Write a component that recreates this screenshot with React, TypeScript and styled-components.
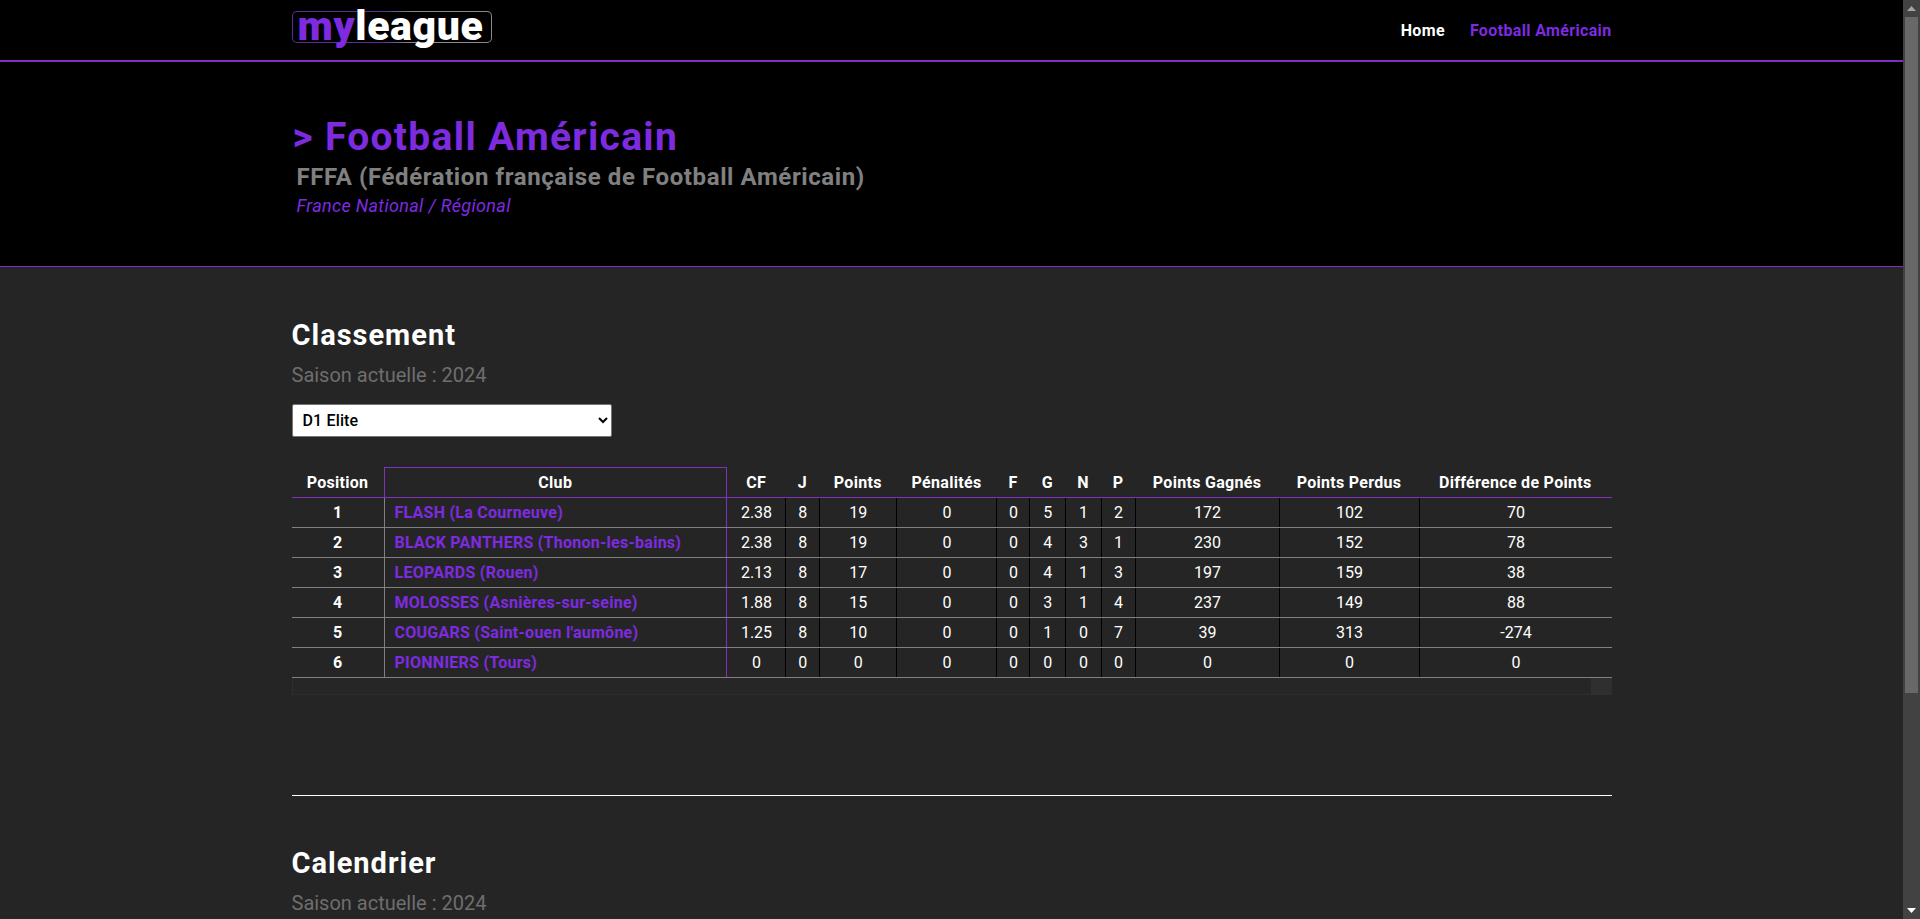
import React from "react";
import styled, { createGlobalStyle } from "styled-components";

const PURPLE = "#7e2be0";
const LINE = "#7f30c0";

const Global = createGlobalStyle`
  html { background: #252525; }
  body { margin: 0; background: #252525; color: #fff; font-family: Roboto, "Noto Sans", sans-serif; }
`;

const Page = styled.div`
  min-height: 1203px;
  margin-right: 17px;
`;
const Container = styled.div`
  width: 1320px;
  margin: 0 auto;
`;
const Rail = styled.div`
  position: fixed;
  top: 0;
  right: 0;
  bottom: 0;
  width: 17px;
  background: #424242;
  display: flex;
  flex-direction: column;
`;
const RailButton = styled.div`
  height: 17px;
  display: flex;
  align-items: center;
  justify-content: center;
  flex: none;
`;
const RailThumb = styled.div`
  height: 676px;
  margin: 0 2px;
  background: #686868;
  flex: none;
`;
const RailSpacer = styled.div`
  flex: 1;
`;
const Header = styled.header`
  background: #000;
  border-bottom: 2px solid ${LINE};
`;
const HeaderRow = styled(Container)`
  height: 60px;
  display: flex;
  align-items: center;
  justify-content: space-between;
`;
const Logo = styled.div`
  width: 200px;
  height: 32px;
  margin-bottom: 6px;
  box-sizing: border-box;
  border: 1px solid transparent;
  border-radius: 5px;
  background: linear-gradient(#000, #000) padding-box,
    linear-gradient(90deg, #5b2a96 0%, #5b2a96 45%, #8a8a8a 60%, #8a8a8a 100%) border-box;
  display: flex;
  align-items: flex-start;
  padding-left: 5px;
`;
const LogoText = styled.span`
  font: 900 41px/32px Roboto, sans-serif;
  letter-spacing: 0.6px;
  margin-top: -2px;
  color: #fff;
`;
const LogoMy = styled.span`
  color: ${PURPLE};
`;
const Nav = styled.nav`
  display: flex;
  gap: 25px;
  margin-top: 2px;
`;
const NavLink = styled.a<{ $active?: boolean }>`
  font-size: 16px;
  font-weight: 700;
  line-height: 24px;
  letter-spacing: 0.35px;
  color: ${(p) => (p.$active ? PURPLE : "#fff")};
`;
const Hero = styled.section`
  background: #000;
  border-bottom: 1px solid ${LINE};
  padding: 51px 0 48px;
`;
const HeroTitle = styled.h1`
  margin: 0 0 1px;
  font-size: 39px;
  line-height: 48px;
  letter-spacing: 1.3px;
  font-weight: 700;
  color: ${PURPLE};
  padding-left: 1px;
`;
const HeroSub = styled.div`
  margin: 0 0 2px 5px;
  font-size: 24px;
  line-height: 30px;
  letter-spacing: 0.6px;
  font-weight: 700;
  color: #808080;
`;
const HeroNote = styled.div`
  margin-left: 5px;
  font-size: 18px;
  line-height: 24px;
  letter-spacing: 0.33px;
  font-style: italic;
  color: ${PURPLE};
`;
const Main = styled(Container)`
  padding-top: 51px;
`;
const SectionTitle = styled.h2`
  margin: 0 0 11px;
  font-size: 29px;
  line-height: 34px;
  letter-spacing: 1px;
  font-weight: 700;
  color: #fff;
`;
const Season = styled.div`
  font-size: 20px;
  line-height: 24px;
  color: #6e6e6e;
`;
const Select = styled.select`
  display: block;
  width: 320px;
  height: 33px;
  margin: 17px 0 30px;
  padding: 0 6px;
  background: #fff;
  border: 1px solid #767676;
  border-radius: 2px;
  color: #000;
  font: 500 16px Roboto, sans-serif;
  letter-spacing: 0.15px;
`;
const Table = styled.table`
  width: 1320px;
  table-layout: fixed;
  border-collapse: collapse;
  font-size: 16px;
  color: #fff;
`;
const Col = styled.col<{ $w: number }>`
  width: ${(p) => p.$w}px;
`;
const Th = styled.th<{ $club?: boolean }>`
  height: 29px;
  padding: 0;
  font-weight: 700;
  letter-spacing: 0.3px;
  text-align: center;
  white-space: nowrap;
  border-bottom: 1px solid ${LINE};
  ${(p) => (p.$club ? `border: 1px solid ${LINE};` : "")}
`;
const Td = styled.td`
  height: 29px;
  padding: 0 0 0 1px;
  text-align: center;
  border-bottom: 1px solid #808080;
  border-left: 1px solid #000;
  &:first-child {
    border-left: none;
    padding-left: 0;
    font-weight: 700;
  }
`;
const ClubTd = styled(Td)`
  text-align: left;
  padding-left: 10px;
  font-weight: 700;
  letter-spacing: 0.26px;
  color: ${PURPLE};
  border-left: 1px solid #808080;
  border-right: 1px solid ${LINE};
  white-space: nowrap;
`;
const ScrollStrip = styled.div`
  display: flex;
  height: 17px;
  background: #2f2f2f;
`;
const ScrollThumb = styled.div`
  width: 1299px;
  box-sizing: border-box;
  background: #262626;
  border-left: 1px solid #2e2e2e;
  border-bottom: 1px solid #2e2e2e;
`;
const Rule = styled.hr`
  margin: 100px 0 50px;
  border: none;
  height: 1px;
  background: #fff;
`;

const widths = [92.5, 342.5, 59, 33.5, 77.5, 100, 33, 35.5, 36, 34, 144, 140, 192.5];
const heads = ["Position", "Club", "CF", "J", "Points", "Pénalités", "F", "G", "N", "P", "Points Gagnés", "Points Perdus", "Différence de Points"];
const rows: (string | number)[][] = [
  [1, "FLASH (La Courneuve)", "2.38", 8, 19, 0, 0, 5, 1, 2, 172, 102, 70],
  [2, "BLACK PANTHERS (Thonon-les-bains)", "2.38", 8, 19, 0, 0, 4, 3, 1, 230, 152, 78],
  [3, "LEOPARDS (Rouen)", "2.13", 8, 17, 0, 0, 4, 1, 3, 197, 159, 38],
  [4, "MOLOSSES (Asnières-sur-seine)", "1.88", 8, 15, 0, 0, 3, 1, 4, 237, 149, 88],
  [5, "COUGARS (Saint-ouen l'aumône)", "1.25", 8, 10, 0, 0, 1, 0, 7, 39, 313, -274],
  [6, "PIONNIERS (Tours)", 0, 0, 0, 0, 0, 0, 0, 0, 0, 0, 0],
];

export default function App() {
  return (
    <Page>
      <Global />
      <Header>
        <HeaderRow>
          <Logo>
            <LogoText>
              <LogoMy>my</LogoMy>league
            </LogoText>
          </Logo>
          <Nav>
            <NavLink>Home</NavLink>
            <NavLink $active>Football Américain</NavLink>
          </Nav>
        </HeaderRow>
      </Header>
      <Hero>
        <Container>
          <HeroTitle>&gt; Football Américain</HeroTitle>
          <HeroSub>FFFA (Fédération française de Football Américain)</HeroSub>
          <HeroNote>France National / Régional</HeroNote>
        </Container>
      </Hero>
      <Main>
        <SectionTitle>Classement</SectionTitle>
        <Season>Saison actuelle : 2024</Season>
        <Select defaultValue="D1 Elite">
          <option>D1 Elite</option>
        </Select>
        <Table>
          <colgroup>
            {widths.map((w, i) => (
              <Col key={i} $w={w} />
            ))}
          </colgroup>
          <thead>
            <tr>
              {heads.map((h, i) => (
                <Th key={h} $club={i === 1}>
                  {h}
                </Th>
              ))}
            </tr>
          </thead>
          <tbody>
            {rows.map((r) => (
              <tr key={r[0]}>
                {r.map((c, i) =>
                  i === 1 ? <ClubTd key={i}>{c}</ClubTd> : <Td key={i}>{c}</Td>
                )}
              </tr>
            ))}
          </tbody>
        </Table>
        <ScrollStrip>
          <ScrollThumb />
        </ScrollStrip>
        <Rule />
        <SectionTitle>Calendrier</SectionTitle>
        <Season>Saison actuelle : 2024</Season>
      </Main>
      <Rail>
        <RailButton>
          <svg width="9" height="5" viewBox="0 0 9 5"><path d="M4.5 0 9 5H0z" fill="#a3a3a3" /></svg>
        </RailButton>
        <RailThumb />
        <RailSpacer />
        <RailButton>
          <svg width="9" height="5" viewBox="0 0 9 5"><path d="M0 0h9L4.5 5z" fill="#fff" /></svg>
        </RailButton>
      </Rail>
    </Page>
  );
}
